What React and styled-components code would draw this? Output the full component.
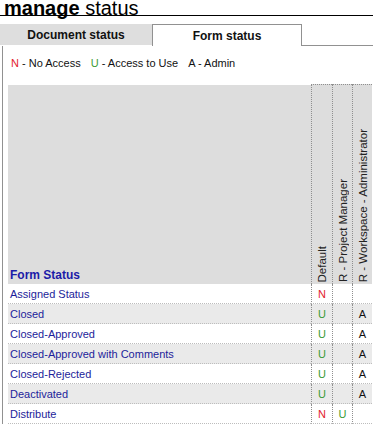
import React from "react";
import styled, { createGlobalStyle } from "styled-components";

const GlobalStyle = createGlobalStyle`
  html, body {
    margin: 0;
    padding: 0;
    background: #ffffff;
  }
  body {
    font-family: "Liberation Sans", Arial, sans-serif;
    font-size: 11px;
    color: #000;
    overflow: hidden;
  }
`;

const roles = ["Default", "R - Project Manager", "R - Workspace - Administrator"];

const statuses = [
  { name: "Assigned Status", access: ["N", "", ""] },
  { name: "Closed", access: ["U", "", "A"] },
  { name: "Closed-Approved", access: ["U", "", "A"] },
  { name: "Closed-Approved with Comments", access: ["U", "", "A"] },
  { name: "Closed-Rejected", access: ["U", "", "A"] },
  { name: "Deactivated", access: ["U", "", "A"] },
  { name: "Distribute", access: ["N", "U", ""] },
];

const App = () => {
  return (
    <Page>
      <GlobalStyle />
      <Title>
        <b>manage</b> status
      </Title>

      <Tabs>
        <Tab>Document status</Tab>
        <Tab active>Form status</Tab>
        <TabFill />
      </Tabs>

      <Panel>
        <Legend>
          <span><Code kind="N">N</Code> - No Access</span>
          <span><Code kind="U">U</Code> - Access to Use</span>
          <span><Code kind="A">A</Code> - Admin</span>
        </Legend>

        <Grid>
          <HeadCell>Form Status</HeadCell>
          {roles.map((r) => (
            <RoleCell key={r}>
              <RoleText>{r}</RoleText>
            </RoleCell>
          ))}

          {statuses.map((s, i) => (
            <React.Fragment key={s.name}>
              <NameCell odd={i % 2 === 1}>{s.name}</NameCell>
              {s.access.map((a, j) => (
                <AccessCell key={j} odd={i % 2 === 1}>
                  <Code kind={a}>{a}</Code>
                </AccessCell>
              ))}
            </React.Fragment>
          ))}
        </Grid>
      </Panel>
    </Page>
  );
};

export default App;

const Page = styled.div`
  width: 373px;
  height: 424px;
  overflow: hidden;
`;

const Title = styled.h1`
  margin: 0;
  padding: 1px 0 0 4px;
  height: 14px;
  line-height: 14px;
  font-size: 20px;
  font-weight: normal;
  font-family: "Liberation Sans", Arial, sans-serif;
  color: #000;
  border-bottom: 1px solid #000;

  b {
    font-weight: bold;
  }
`;

const Tabs = styled.div`
  display: flex;
  margin-top: 8px;
  height: 22px;
`;

const Tab = styled.div`
  box-sizing: border-box;
  width: ${(p) => (p.active ? "150px" : "152px")};
  height: ${(p) => (p.active ? "22px" : "21px")};
  display: flex;
  align-items: center;
  justify-content: center;
  font-weight: bold;
  font-size: 12px;
  color: #111;
  background: ${(p) => (p.active ? "#ffffff" : "#dedede")};
  border: 1px solid ${(p) => (p.active ? "#919191" : "#dedede")};
  border-bottom: ${(p) => (p.active ? "none" : "1px solid #dedede")};
`;

const TabFill = styled.div`
  flex: 1;
  height: 22px;
  box-sizing: border-box;
  border-bottom: 1px solid #919191;
`;

const Panel = styled.div`
  border-left: 1px solid #919191;
  margin-left: 2px;
  padding: 0 0 0 5px;
`;

const Legend = styled.div`
  display: flex;
  gap: 10px;
  padding: 11px 0 0 3px;
  height: 27px;
  box-sizing: border-box;
  margin-bottom: 11px;
  color: #111;
`;

const Code = styled.span`
  color: ${(p) => (p.kind === "N" ? "#e31d2c" : p.kind === "U" ? "#3c9b35" : "#111")};
`;

const Grid = styled.div`
  display: grid;
  grid-template-columns: 303px 21px 20px 20px;
  grid-template-rows: 200px;
  grid-auto-rows: 20px;
`;

const HeadCell = styled.div`
  background: #dddddd;
  display: flex;
  align-items: flex-end;
  padding: 0 0 2px 2px;
  font-weight: bold;
  font-size: 12px;
  color: #1b1ba8;
  border-top: 1px solid #fff;
`;

const RoleCell = styled.div`
  background: #dddddd;
  border-left: 1px dotted #8f8f8f;
  border-top: 1px dotted #8f8f8f;
  display: flex;
  align-items: flex-end;
  justify-content: center;
  padding-bottom: 2px;
`;

const RoleText = styled.span`
  writing-mode: vertical-rl;
  transform: rotate(180deg);
  white-space: nowrap;
  font-size: 11.5px;
  color: #222;
`;

const NameCell = styled.div`
  background: ${(p) => (p.odd ? "#eaeaea" : "#ffffff")};
  border-bottom: 1px dotted #bdbdbd;
  display: flex;
  align-items: center;
  padding-left: 2px;
  color: #1d1d9a;
`;

const AccessCell = styled.div`
  background: ${(p) => (p.odd ? "#eaeaea" : "#ffffff")};
  border-bottom: 1px dotted #bdbdbd;
  border-left: 1px dotted #8f8f8f;
  display: flex;
  align-items: center;
  justify-content: center;
`;
